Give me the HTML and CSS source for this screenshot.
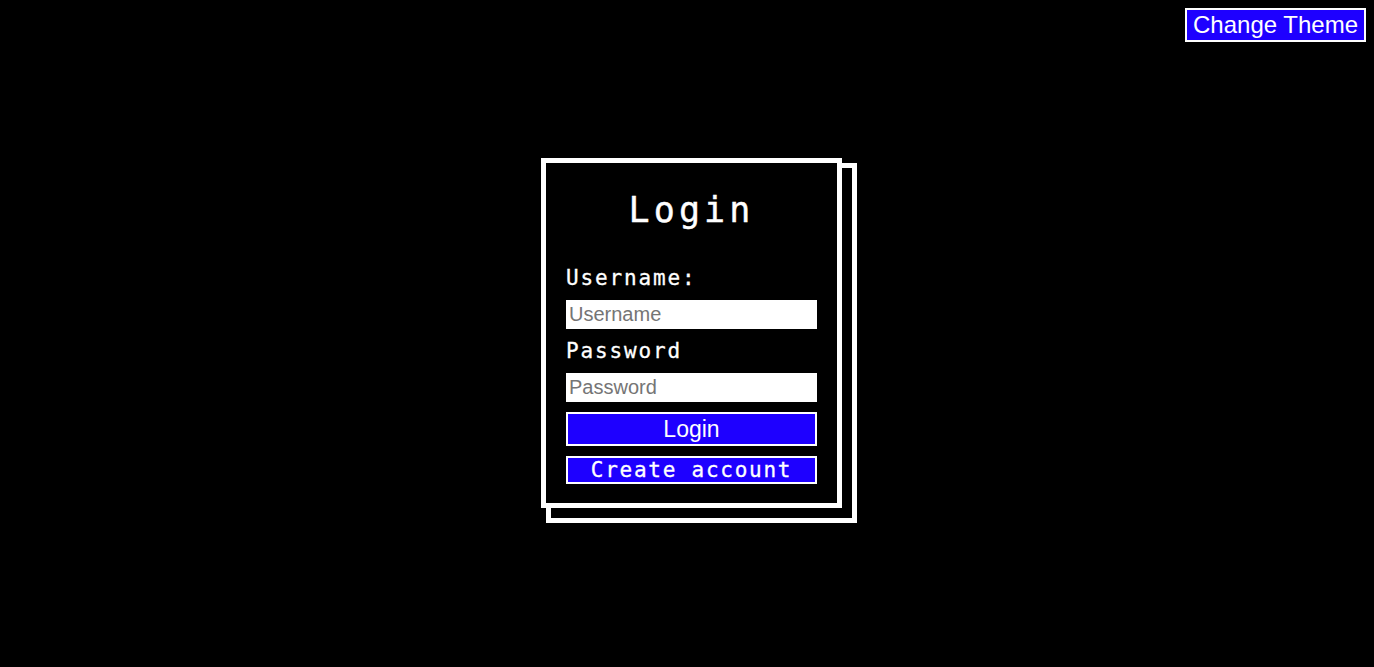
FILE: index.html
```html
<!DOCTYPE html>
<html lang="en">
<head>
<meta charset="utf-8">
<title>Login</title>
<link rel="stylesheet" href="styles.css">
</head>
<body>
<button class="theme-btn" type="button">Change Theme</button>
<main class="page">
  <form class="card">
    <h1 class="title">Login</h1>
    <label class="label" for="username">Username:</label>
    <input class="field" id="username" type="text" placeholder="Username">
    <label class="label" for="password">Password</label>
    <input class="field" id="password" type="password" placeholder="Password">
    <button class="btn btn-login" type="button">Login</button>
    <button class="btn btn-create" type="button">Create account</button>
  </form>
</main>
</body>
</html>
```

FILE: styles.css
```css
html {
  height: 100%;
  background: #000;
}

body {
  margin: 0;
  padding: 0;
  height: 100%;
  color: #fff;
  font-family: "DejaVu Sans Mono", monospace;
}

.theme-btn {
  position: fixed;
  top: 8px;
  right: 8px;
  height: 34px;
  box-sizing: border-box;
  margin: 0;
  padding: 0 6px;
  border: 2px solid #fff;
  background: #1e00ff;
  color: #fff;
  font-family: "Liberation Sans", Arial, sans-serif;
  font-size: 24px;
  line-height: 1;
  cursor: pointer;
}

.page {
  height: 100%;
  display: flex;
  align-items: center;
  justify-content: center;
}

.card {
  position: relative;
  width: 301px;
  height: 350px;
  box-sizing: border-box;
  margin: -1px 0 0 9px;
  padding: 27px 20px 0;
  border: 5px solid #fff;
  background: #000;
  display: flex;
  flex-direction: column;
  gap: 10px;
}

.card::before {
  content: "";
  position: absolute;
  top: 0;
  left: 0;
  width: calc(100% + 20px);
  height: calc(100% + 20px);
  box-sizing: border-box;
  border: 5px solid #fff;
  z-index: -1;
}

.title {
  margin: 0 0 26px;
  text-align: center;
  font-size: 35px;
  font-weight: normal;
  letter-spacing: 4.1px;
  line-height: normal;
  -webkit-text-stroke: 0.4px #fff;
}

.label {
  font-size: 21px;
  letter-spacing: 1.85px;
  line-height: normal;
  -webkit-text-stroke: 0.3px #fff;
}

.field {
  height: 29px;
  box-sizing: border-box;
  margin: 0;
  padding: 0 3px;
  border: none;
  background: #fff;
  color: #000;
  font-family: "Liberation Sans", Arial, sans-serif;
  font-size: 20px;
  outline: none;
}

.field::placeholder {
  color: #757575;
}

.btn {
  margin: 0;
  box-sizing: border-box;
  border: 2px solid #fff;
  background: #1e00ff;
  color: #fff;
  cursor: pointer;
}

.btn-login {
  height: 34px;
  padding: 0;
  font-family: "Liberation Sans", Arial, sans-serif;
  font-size: 23px;
  line-height: 1;
}

.btn-create {
  height: 28px;
  padding: 0;
  font-family: "DejaVu Sans Mono", monospace;
  font-size: 21px;
  letter-spacing: 1.75px;
  line-height: 1;
  -webkit-text-stroke: 0.3px #fff;
}
```
